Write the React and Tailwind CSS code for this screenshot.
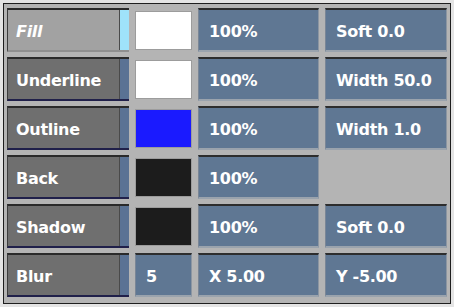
import React from 'react';

const rows = [
  { label: 'Fill', active: true, swatch: 'bg-white', a: '100%', b: 'Soft 0.0' },
  { label: 'Underline', swatch: 'bg-white', a: '100%', b: 'Width 50.0' },
  { label: 'Outline', swatch: 'bg-[#1a1aff]', a: '100%', b: 'Width 1.0' },
  { label: 'Back', swatch: 'bg-[#1c1c1c]', a: '100%', b: null },
  { label: 'Shadow', swatch: 'bg-[#1c1c1c]', a: '100%', b: 'Soft 0.0' },
  { label: 'Blur', swatch: null, num: '5', a: 'X 5.00', b: 'Y -5.00' },
];

const LayerButton = ({ label, active }) => (
  <div className={`flex border-t-2 border-t-[#2a2a2a] border-l border-l-[#3c3c3c] border-b-2 ${active ? 'border-b-[#8f8f8f] bg-[#a2a2a2]' : 'border-b-[#20204a] bg-[#6f6f6f]'}`}>
    <div className={`flex-1 flex items-center pl-[8px] pt-[3px] text-white ${active ? 'italic' : ''}`}>{label}</div>
    <div className={`w-[10px] border-l border-l-[#4a4a4a] ${active ? 'bg-[#9fe2fa]' : 'bg-[#5a7294]'}`} />
  </div>
);

const Field = ({ children }) => (
  <div className="flex items-center pl-[10px] pt-[3px] text-white bg-[#5f7793] border-t-2 border-t-[#2d2d2d] border-l border-l-[#7a8696] border-r border-r-[#8c96a2] border-b-2 border-b-[#9aa3ad]">
    {children}
  </div>
);

export default function App() {
  return (
    <div className="w-[454px] h-[307px] bg-[#e4e4e4] p-[3px]" style={{ fontFamily: '"DejaVu Sans", sans-serif' }}>
      <div className="w-full h-full border border-[#1e1e1e] bg-[#b4b4b4] pl-[3px] pt-[4px]">
        <div className="grid grid-cols-[122px_57px_121px_122px] auto-rows-[44px] gap-x-[6px] gap-y-[5px] text-[16px] font-bold leading-none tracking-[-0.3px]">
          {rows.map((r) => (
            <React.Fragment key={r.label}>
              <LayerButton label={r.label} active={r.active} />
              {r.swatch ? (
                <div className="pt-[3px] pb-[2px]">
                  <div className={`h-full ${r.swatch} border border-[#9c9c9c]`} />
                </div>
              ) : (
                <Field>{r.num}</Field>
              )}
              <Field>{r.a}</Field>
              {r.b ? <Field>{r.b}</Field> : <div />}
            </React.Fragment>
          ))}
        </div>
      </div>
    </div>
  );
}
